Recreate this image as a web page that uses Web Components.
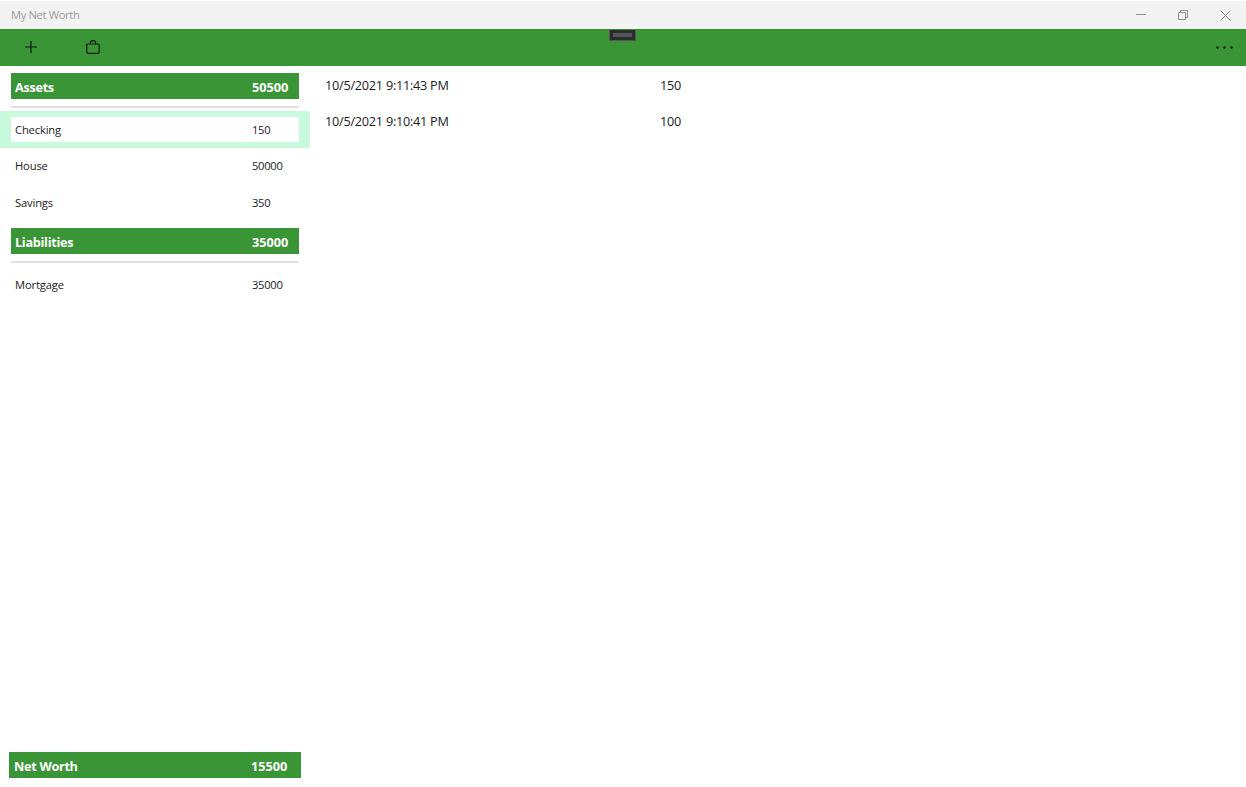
<!DOCTYPE html>
<html>
<head>
<meta charset="utf-8">
<title>My Net Worth</title>
<style>
html, body { margin: 0; height: 100%; background: white; overflow: hidden; }
body { font-family: "Open Sans", "Noto Sans", sans-serif; }
</style>
</head>
<body>
<net-worth-app></net-worth-app>

<script>
/*
  net-worth-app  --> whole window, title bar + command bar + panes
  title-bar      --> window title and caption buttons
  command-bar    --> green bar with the add / store / more buttons
  total-header   --> green strip with a label and an amount
  account-row    --> one account of the list, attribute "selected"
  history-row    --> one dated value on the right pane
*/

class TitleBar extends HTMLElement {
    constructor() {
        super();
        this.attachShadow({ mode: "open" });
        this.shadowRoot.innerHTML = `
        <style>
            :host {
                display: flex;
                align-items: center;
                justify-content: space-between;
                height: 28px;
                margin-top: 1px;
                padding-left: 11px;
                background-color: #f3f3f3;
                color: #9a9a9a;
                font-size: 11.2px;
                letter-spacing: -0.35px;
            }
            span { margin-bottom: 1px; }
            .caption { display: flex; }
            .caption div {
                width: 42px;
                height: 28px;
                display: flex;
                align-items: center;
                justify-content: center;
            }
            svg { fill: none; stroke: #8c8c8c; stroke-width: 1; }
        </style>
        <span><slot></slot></span>
        <div class="caption">
            <div><svg width="10" height="10"><path d="M0 4.5H10"/></svg></div>
            <div><svg width="10" height="10"><path d="M.5 2.5h7v7h-7zM2.5 2.5V.5h7v7h-2"/></svg></div>
            <div><svg width="11" height="11"><path d="M.5 .5l10 10M10.5 .5l-10 10"/></svg></div>
        </div>`;
    }
}
customElements.define("title-bar", TitleBar);

class CommandBar extends HTMLElement {
    constructor() {
        super();
        this.attachShadow({ mode: "open" });
        this.shadowRoot.innerHTML = `
        <style>
            :host {
                display: flex;
                align-items: center;
                position: relative;
                height: 37px;
                box-sizing: border-box;
                background-color: #3a9537;
                border-top: 1px solid #359033;
                border-bottom: 1px solid #2f9a2e;
                padding: 0 13px 1px 25px;
            }
            svg { display: block; fill: none; stroke: #0d1a0c; stroke-width: 1.2; }
            .store { margin-left: 49px; }
            .more { margin-left: auto; }
            .more svg { fill: #0d1a0c; stroke: none; }
            .grip {
                position: absolute;
                left: 609px;
                top: 0;
                width: 27px;
                height: 11px;
                box-sizing: border-box;
                background-color: #2b2b2e;
                border: 1px solid #555;
                border-top: 0;
                display: flex;
                align-items: center;
                justify-content: center;
            }
            .grip div { width: 19px; height: 4px; background-color: #555; }
        </style>
        <svg width="12" height="12"><path d="M6 0V12M0 6H12"/></svg>
        <svg class="store" width="14" height="14"><path d="M1.8 4h10.4a1 1 0 0 1 1 1v6.8a1.6 1.6 0 0 1-1.6 1.6H2.4a1.6 1.6 0 0 1-1.6-1.6V5a1 1 0 0 1 1-1zM4.3 4V3a2.7 2.4 0 0 1 5.4 0v1"/></svg>
        <div class="more"><svg width="17" height="3"><circle cx="1.5" cy="1.5" r="1.2"/><circle cx="8.5" cy="1.5" r="1.2"/><circle cx="15.5" cy="1.5" r="1.2"/></svg></div>
        <div class="grip"><div></div></div>`;
    }
}
customElements.define("command-bar", CommandBar);

class TotalHeader extends HTMLElement {
    constructor() {
        super();
        this.attachShadow({ mode: "open" });
        this.shadowRoot.innerHTML = `
        <style>
            :host {
                display: grid;
                grid-template-columns: 1fr var(--amount-width, 47px);
                align-items: center;
                height: 26px;
                padding: 0 0 0 4px;
                background-color: #3a9537;
                color: white;
                font-size: 12.7px;
                font-weight: 700;
            }
            .label { letter-spacing: -0.3px; padding-top: 1px; }
            .amount { padding-top: 1px; }
        </style>
        <span class="label"><slot></slot></span>
        <span class="amount"><slot name="amount"></slot></span>`;
    }
}
customElements.define("total-header", TotalHeader);

class AccountRow extends HTMLElement {
    constructor() {
        super();
        this.attachShadow({ mode: "open" });
        this.shadowRoot.innerHTML = `
        <style>
            :host {
                display: block;
                padding: 6px 11px;
                color: #222;
                font-size: 11.2px;
            }
            :host([selected]) { background-color: #c9fadd; }
            .inner {
                display: grid;
                grid-template-columns: 1fr 47px;
                align-items: center;
                height: 24.5px;
                padding-left: 4px;
                background-color: white;
                letter-spacing: -0.15px;
            }
            .amount { letter-spacing: -0.3px; }
        </style>
        <div class="inner">
            <span><slot></slot></span>
            <span class="amount"><slot name="amount"></slot></span>
        </div>`;
    }
}
customElements.define("account-row", AccountRow);

class HistoryRow extends HTMLElement {
    constructor() {
        super();
        this.attachShadow({ mode: "open" });
        this.shadowRoot.innerHTML = `
        <style>
            :host {
                display: grid;
                grid-template-columns: 335px auto;
                justify-content: start;
                align-items: center;
                height: 36.3px;
                color: #1a1a1a;
                font-size: 12.7px;
                letter-spacing: -0.25px;
            }
            .date, .amount { padding-bottom: 1px; }
        </style>
        <span class="date"><slot></slot></span>
        <span class="amount"><slot name="amount"></slot></span>`;
    }
}
customElements.define("history-row", HistoryRow);

class NetWorthApp extends HTMLElement {
    constructor() {
        super();
        this.attachShadow({ mode: "open" });
        this.shadowRoot.innerHTML = `
        <style>
            :host {
                display: flex;
                flex-direction: column;
                height: 787px;
            }
            .panes {
                flex: 1;
                display: flex;
                min-height: 0;
            }
            .accounts {
                width: 310px;
                display: flex;
                flex-direction: column;
                flex: none;
            }
            .group { padding: 7px 11px 0; }
            hr {
                height: 2px;
                border: 0;
                margin: 7px 0 3px;
                background-color: #e0e0e0;
            }
            .second { padding-top: 7.5px; }
            .second hr { margin-bottom: 3px; }
            .footer { margin-top: auto; padding: 0 9px 9px; }
            .footer total-header { padding-left: 5px; --amount-width: 50px; }
            .history { flex: 1; padding: 1px 0 0 15px; }
        </style>
        <title-bar>My Net Worth</title-bar>
        <command-bar></command-bar>
        <div class="panes">
            <div class="accounts">
                <div class="group">
                    <total-header>Assets<span slot="amount">50500</span></total-header>
                    <hr>
                </div>
                <account-row selected>Checking<span slot="amount">150</span></account-row>
                <account-row>House<span slot="amount">50000</span></account-row>
                <account-row>Savings<span slot="amount">350</span></account-row>
                <div class="group second">
                    <total-header>Liabilities<span slot="amount">35000</span></total-header>
                    <hr>
                </div>
                <account-row>Mortgage<span slot="amount">35000</span></account-row>
                <div class="footer">
                    <total-header>Net Worth<span slot="amount">15500</span></total-header>
                </div>
            </div>
            <div class="history">
                <history-row>10/5/2021 9:11:43 PM<span slot="amount">150</span></history-row>
                <history-row>10/5/2021 9:10:41 PM<span slot="amount">100</span></history-row>
            </div>
        </div>`;
    }
}
customElements.define("net-worth-app", NetWorthApp);
</script>
</body>
</html>
